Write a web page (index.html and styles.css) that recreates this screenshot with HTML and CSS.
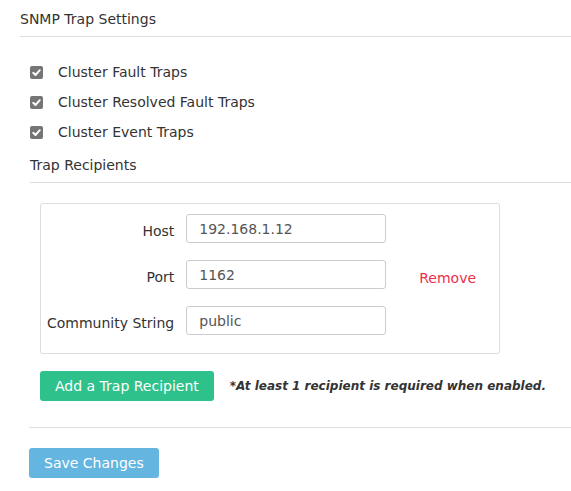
FILE: index.html
```html
<!DOCTYPE html>
<html>
<head>
<meta charset="utf-8">
<link rel="stylesheet" href="styles.css">
</head>
<body>
<div class="page">
  <h2 class="section-title">SNMP Trap Settings</h2>
  <div class="section-body">
    <ul class="checks">
      <li class="check-row"><span class="cb"><svg viewBox="0 0 13 13" width="13" height="13"><path d="M3.2 6.8 L5.5 9 L9.8 4.2" fill="none" stroke="#fff" stroke-width="1.9" stroke-linecap="round" stroke-linejoin="round"/></svg></span><span>Cluster Fault Traps</span></li>
      <li class="check-row"><span class="cb"><svg viewBox="0 0 13 13" width="13" height="13"><path d="M3.2 6.8 L5.5 9 L9.8 4.2" fill="none" stroke="#fff" stroke-width="1.9" stroke-linecap="round" stroke-linejoin="round"/></svg></span><span>Cluster Resolved Fault Traps</span></li>
      <li class="check-row"><span class="cb"><svg viewBox="0 0 13 13" width="13" height="13"><path d="M3.2 6.8 L5.5 9 L9.8 4.2" fill="none" stroke="#fff" stroke-width="1.9" stroke-linecap="round" stroke-linejoin="round"/></svg></span><span>Cluster Event Traps</span></li>
    </ul>
    <h3 class="sub-title">Trap Recipients</h3>
    <div class="recipients">
      <div class="recipient-card">
        <div class="fields">
          <label class="field-label">Host</label>
          <div class="input">192.168.1.12</div>
          <label class="field-label">Port</label>
          <div class="input">1162</div>
          <label class="field-label">Community String</label>
          <div class="input">public</div>
        </div>
        <a class="remove">Remove</a>
      </div>
      <div class="add-row">
        <button class="btn btn-green">Add a Trap Recipient</button>
        <span class="note">*At least 1 recipient is required when enabled.</span>
      </div>
    </div>
  </div>
  <div class="footer">
    <button class="btn btn-blue">Save Changes</button>
  </div>
</div>
</body>
</html>
```
FILE: styles.css
```css
* { box-sizing: border-box; }
html, body { margin: 0; padding: 0; background: #fff; }
body {
  font-family: "DejaVu Sans", Verdana, sans-serif;
  font-size: 14px;
  color: #333;
}
.page { padding: 9px 0 0 20px; }
.section-title {
  margin: 0;
  font-size: 14px;
  font-weight: normal;
  line-height: 20px;
  padding-bottom: 7px;
  border-bottom: 1px solid #ddd;
}
.section-body { padding-left: 10px; }
.checks { list-style: none; margin: 0; padding: 20px 0 0; }
.check-row {
  display: flex;
  align-items: center;
  height: 30px;
  gap: 15px;
}
.cb {
  width: 13px; height: 13px;
  background: #757575;
  border-radius: 2px;
  display: inline-flex;
}
.sub-title {
  margin: 0;
  font-size: 14px;
  font-weight: normal;
  line-height: 20px;
  padding: 8px 0 7px;
  border-bottom: 1px solid #ddd;
}
.recipients { padding: 20px 0 0 10px; }
.recipient-card {
  width: 460px;
  border: 1px solid #ddd;
  border-radius: 3px;
  padding: 10px 0 18px 6px;
  display: flex;
  align-items: center;
}
.fields {
  display: grid;
  grid-template-columns: auto 200px;
  column-gap: 12px;
  row-gap: 17px;
  align-items: center;
}
.field-label { text-align: right; padding-top: 4px; line-height: 20px; }
.input {
  height: 29px;
  border: 1px solid #ccc;
  border-radius: 3px;
  padding: 1px 12px 0;
  line-height: 26px;
  color: #555;
}
.remove {
  color: #ec2f4b;
  margin-left: 33px;
  padding-top: 7px;
}
.add-row {
  display: flex;
  align-items: center;
  gap: 16px;
  padding-top: 17px;
}
.btn {
  font-family: inherit;
  font-size: 14px;
  color: #fff;
  border: none;
  border-radius: 3px;
  height: 30px;
  padding: 0 15px;
}
.btn-green { background: #2ec18b; }
.btn-blue { background: #64b5e0; }
.note {
  font-style: italic;
  font-weight: bold;
  font-size: 12px;
}
.footer {
  margin-top: 26px;
  margin-left: 9px;
  border-top: 1px solid #ddd;
  padding-top: 20px;
}
```
